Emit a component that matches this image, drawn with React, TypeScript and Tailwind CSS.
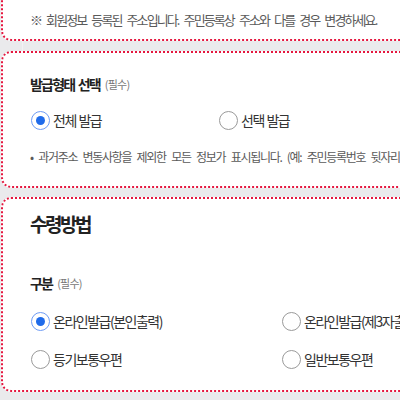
import React from "react";

const font = { fontFamily: '"Noto Sans CJK KR", "Noto Sans", sans-serif' };

function Radio({ checked, label, width }: { checked?: boolean; label: string; width?: string }) {
  return (
    <label className={`flex items-center gap-[3px] h-[20px] ${width ?? ""}`}>
      {checked ? (
        <span className="flex items-center justify-center w-[19px] h-[19px] rounded-full border-[1.5px] border-[#6f9cf4] bg-white">
          <span className="w-[9px] h-[9px] rounded-full bg-[#1f6bea]" />
        </span>
      ) : (
        <span className="w-[19px] h-[19px] rounded-full border border-[#9a9a9a] bg-white" />
      )}
      <span className="text-[14px] tracking-[-1.5px] [word-spacing:1px] text-[#333] whitespace-nowrap">{label}</span>
    </label>
  );
}

/** 증명서 발급 옵션 */
export default function App() {
  const card = "bg-white border-2 border-dotted border-[#e5173f] rounded-[10px] ml-[1px] mr-[-40px]";

  return (
    <div className="w-[400px] h-[400px] overflow-hidden bg-[#eaeaec]" style={font}>
      <div className={`${card} -mt-[30px] pt-[38px] pb-[9px] pl-[27px]`}>
        <p className="h-[20px] leading-[20px] text-[13px] tracking-[-1.9px] [word-spacing:4px] text-[#5a5a5a] whitespace-nowrap">
          ※ 회원정보 등록된 주소입니다. 주민등록상 주소와 다를 경우 변경하세요.
        </p>
      </div>

      <div className="h-[10px] pl-[22px]">
        <div className="w-px h-full bg-[#f2f2f4]" />
      </div>

      <div className={`${card} pt-[21px] pb-[20px] pl-[27px]`}>
        <h3 className="h-[20px] flex items-center gap-[5px] whitespace-nowrap">
          <span className="text-[14px] font-bold tracking-[-1.8px] [word-spacing:2px] text-[#222]">발급형태 선택</span>
          <span className="text-[11px] tracking-[-0.8px] text-[#777]">(필수)</span>
        </h3>
        <div className="flex mt-[16px] pl-[1px]">
          <Radio checked label="전체 발급" width="w-[188px]" />
          <Radio label="선택 발급" />
        </div>
        <p className="mt-[18px] h-[18px] leading-[18px] text-[12px] tracking-[-1.3px] [word-spacing:4px] text-[#5a5a5a] whitespace-nowrap">
          • 과거주소 변동사항을 제외한 모든 정보가 표시됩니다. (예: 주민등록번호 뒷자리, 외국인등록번호 뒷자리)
        </p>
      </div>

      <div className="h-[9px]" />

      <div className={`${card} pt-[12px] pb-[21px] pl-[27px]`}>
        <h2 className="h-[26px] leading-[26px] text-[19px] font-bold tracking-[-2.5px] text-[#222]">수령방법</h2>
        <h3 className="mt-[36px] h-[20px] flex items-center gap-[5px] whitespace-nowrap">
          <span className="text-[14px] font-bold tracking-[-1.8px] text-[#222]">구분</span>
          <span className="text-[11px] tracking-[-0.8px] text-[#777]">(필수)</span>
        </h3>
        <div className="flex mt-[18px] pl-[1px]">
          <Radio checked label="온라인발급(본인출력)" width="w-[251px]" />
          <Radio label="온라인발급(제3자출력)" />
        </div>
        <div className="flex mt-[18px] pl-[1px]">
          <Radio label="등기보통우편" width="w-[251px]" />
          <Radio label="일반보통우편" />
        </div>
      </div>
    </div>
  );
}
